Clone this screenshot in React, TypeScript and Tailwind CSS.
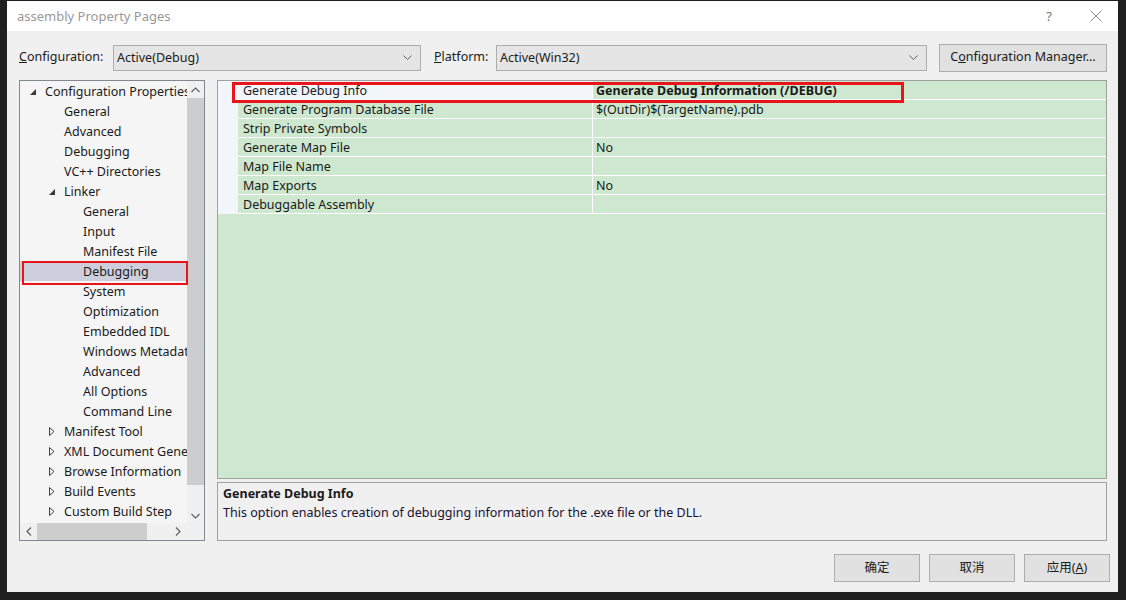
import React from 'react';

type Node = { label: string; level: number; arrow?: 'open' | 'closed'; selected?: boolean };

const tree: Node[] = [
	{ label: 'Configuration Properties', level: 0, arrow: 'open' },
	{ label: 'General', level: 1 },
	{ label: 'Advanced', level: 1 },
	{ label: 'Debugging', level: 1 },
	{ label: 'VC++ Directories', level: 1 },
	{ label: 'Linker', level: 1, arrow: 'open' },
	{ label: 'General', level: 2 },
	{ label: 'Input', level: 2 },
	{ label: 'Manifest File', level: 2 },
	{ label: 'Debugging', level: 2, selected: true },
	{ label: 'System', level: 2 },
	{ label: 'Optimization', level: 2 },
	{ label: 'Embedded IDL', level: 2 },
	{ label: 'Windows Metadata', level: 2 },
	{ label: 'Advanced', level: 2 },
	{ label: 'All Options', level: 2 },
	{ label: 'Command Line', level: 2 },
	{ label: 'Manifest Tool', level: 1, arrow: 'closed' },
	{ label: 'XML Document Generator', level: 1, arrow: 'closed' },
	{ label: 'Browse Information', level: 1, arrow: 'closed' },
	{ label: 'Build Events', level: 1, arrow: 'closed' },
	{ label: 'Custom Build Step', level: 1, arrow: 'closed' },
];

const props = [
	{ name: 'Generate Debug Info', value: 'Generate Debug Information (/DEBUG)', active: true },
	{ name: 'Generate Program Database File', value: '$(OutDir)$(TargetName).pdb' },
	{ name: 'Strip Private Symbols', value: '' },
	{ name: 'Generate Map File', value: 'No' },
	{ name: 'Map File Name', value: '' },
	{ name: 'Map Exports', value: 'No' },
	{ name: 'Debuggable Assembly', value: '' },
];

const indent = ['pl-[25px]', 'pl-[44px]', 'pl-[63px]'];
const arrowPos = ['pl-[10px]', 'pl-[29px]', 'pl-[48px]'];

const Chevron = () => (
	<svg width="9" height="6" viewBox="0 0 9 6" className="text-[#606060]">
		<path d="M0.5 0.5 L4.5 4.5 L8.5 0.5" fill="none" stroke="currentColor" strokeWidth="1" />
	</svg>
);

const Arrow = ({ kind }: { kind: 'open' | 'closed' }) =>
	kind === 'open' ? (
		<svg width="6" height="6" viewBox="0 0 6 6">
			<polygon points="6,0 6,6 0,6" fill="#3a3a3a" />
		</svg>
	) : (
		<svg width="6" height="9" viewBox="0 0 6 9">
			<polygon points="0.5,0.5 5,4.5 0.5,8.5" fill="none" stroke="#404040" strokeWidth="1" />
		</svg>
	);

const Dropdown = ({ value, width }: { value: string; width: string }) => (
	<div className={`${width} h-[26px] border border-[#adadad] bg-[#e5e5e5] flex items-center justify-between pl-[3px] pr-[8px]`}>
		<span className="pt-[1px]">{value}</span>
		<Chevron />
	</div>
);

const Btn = ({ children }: { children: React.ReactNode }) => (
	<div className="w-[86px] h-[28px] border border-[#adadad] bg-[#e1e1e1] flex items-center justify-center">{children}</div>
);

const App: React.FC = () => {
	return (
		<div className="w-[1126px] h-[600px] bg-[#1f1f1f] pl-[7px] pt-[1px] pr-[8px] pb-[8px] font-['Noto_Sans','Noto_Sans_CJK_SC',sans-serif] text-[12.5px] text-[#1a1a1a] leading-none">
			<div className="w-full h-full flex flex-col bg-[#f0f0f0]">
				{/* title bar */}
				<div className="h-[30px] bg-white flex items-center justify-between pl-[10px] pr-[16px] text-[#999] shrink-0">
					<span className="text-[13px]">assembly Property Pages</span>
					<div className="flex items-center gap-[38px] text-[#777]">
						<span className="text-[13px]">?</span>
						<svg width="12" height="12" viewBox="0 0 12 12">
							<path d="M0.5 0.5 L11.5 11.5 M11.5 0.5 L0.5 11.5" stroke="#8a8a8a" strokeWidth="1" />
						</svg>
					</div>
				</div>

				<div className="flex flex-col pl-[12px] pr-[11px] pt-[13px]">
					{/* configuration row */}
					<div className="h-[27px] flex items-center">
						<span className="w-[94px]">
							<span className="underline">C</span>onfiguration:
						</span>
						<Dropdown value="Active(Debug)" width="w-[308px]" />
						<span className="ml-[13px] w-[62px]">
							<span className="underline">P</span>latform:
						</span>
						<Dropdown value="Active(Win32)" width="w-[431px]" />
						<div className="ml-[12px] w-[168px] h-[28px] border border-[#adadad] bg-[#e1e1e1] flex items-center justify-center">
							C<span className="underline">o</span>nfiguration Manager...
						</div>
					</div>

					{/* panels */}
					<div className="mt-[9px] h-[461px] flex gap-[12px]">
						{/* tree */}
						<div className="relative w-[186px] h-full border border-[#828790] bg-[#f5f5f5] flex flex-col">
							<div className="flex flex-1 min-h-0">
								<div className="flex-1 min-w-0 overflow-hidden">
									{tree.map((n, i) => (
										<div key={i} className="relative h-[20px] flex items-center whitespace-nowrap">
											{n.arrow && (
												<span className={`absolute left-0 top-0 h-[20px] flex items-center pt-[1px] ${arrowPos[n.level]}`}>
													<Arrow kind={n.arrow} />
												</span>
											)}
											<span className={`${indent[n.level]} pt-[2px] ${n.selected ? 'w-full h-full flex items-center bg-[#cdd0dc]' : ''}`}>{n.label}</span>
										</div>
									))}
								</div>
								{/* vertical scrollbar */}
								<div className="w-[17px] bg-[#f0f0f0] flex flex-col items-center">
									<div className="h-[17px] flex items-center justify-center">
										<svg width="9" height="6" viewBox="0 0 9 6">
											<path d="M0.5 5 L4.5 1 L8.5 5" fill="none" stroke="#606060" strokeWidth="1.2" />
										</svg>
									</div>
									<div className="w-[17px] h-[387px] bg-[#cdcdcd]" />
									<div className="flex-1 flex items-end justify-center pb-[4px]">
										<svg width="9" height="6" viewBox="0 0 9 6">
											<path d="M0.5 1 L4.5 5 L8.5 1" fill="none" stroke="#606060" strokeWidth="1.2" />
										</svg>
									</div>
								</div>
							</div>
							{/* horizontal scrollbar */}
							<div className="h-[17px] flex bg-[#f0f0f0]">
								<div className="flex-1 flex items-center">
									<div className="w-[17px] flex justify-center">
										<svg width="6" height="9" viewBox="0 0 6 9">
											<path d="M5 0.5 L1 4.5 L5 8.5" fill="none" stroke="#606060" strokeWidth="1.2" />
										</svg>
									</div>
									<div className="w-[110px] h-[17px] bg-[#cdcdcd]" />
									<div className="flex-1 flex justify-end pr-[6px]">
										<svg width="6" height="9" viewBox="0 0 6 9">
											<path d="M1 0.5 L5 4.5 L1 8.5" fill="none" stroke="#606060" strokeWidth="1.2" />
										</svg>
									</div>
								</div>
								<div className="w-[17px] bg-[#f0f0f0]" />
							</div>
							{/* annotation */}
							<div className="absolute left-[2px] top-[180px] w-[166px] h-[24px] border-[2px] border-[#e8141a] pointer-events-none" />
						</div>

						{/* right side */}
						<div className="flex-1 flex flex-col gap-[3px]">
							<div className="relative h-[399px] border border-[#a0a0a0] bg-[#cde8cf]">
								{props.map((p, i) => (
									<div key={i} className="h-[19px] flex">
										<div className="w-[20px] bg-[#f2f5f9]" />
										<div className={`w-[354px] pl-[5px] pt-[3px] flex items-center border-b border-white ${p.active ? 'bg-[#f2f5f9]' : ''}`}>{p.name}</div>
										<div className={`flex-1 pl-[3px] pt-[3px] flex items-center border-b border-l border-white ${p.active ? 'font-bold' : ''}`}>{p.value}</div>
									</div>
								))}
								<div className="absolute left-[14px] top-[1px] w-[672px] h-[21px] border-[3px] border-[#e8141a] pointer-events-none" />
							</div>
							<div className="h-[59px] border border-[#a0a0a0] bg-[#f0f0f0] px-[5px] pt-[5px] flex flex-col gap-[6px]">
								<span className="font-bold">Generate Debug Info</span>
								<span className="text-[#1a1030]">This option enables creation of debugging information for the .exe file or the DLL.</span>
							</div>
						</div>
					</div>

					{/* buttons */}
					<div className="mt-[13px] -mr-[3px] flex justify-end gap-[9px]">
						<Btn>确定</Btn>
						<Btn>取消</Btn>
						<Btn>
							应用(<span className="underline">A</span>)
						</Btn>
					</div>
				</div>
			</div>
		</div>
	);
};

export default App;
